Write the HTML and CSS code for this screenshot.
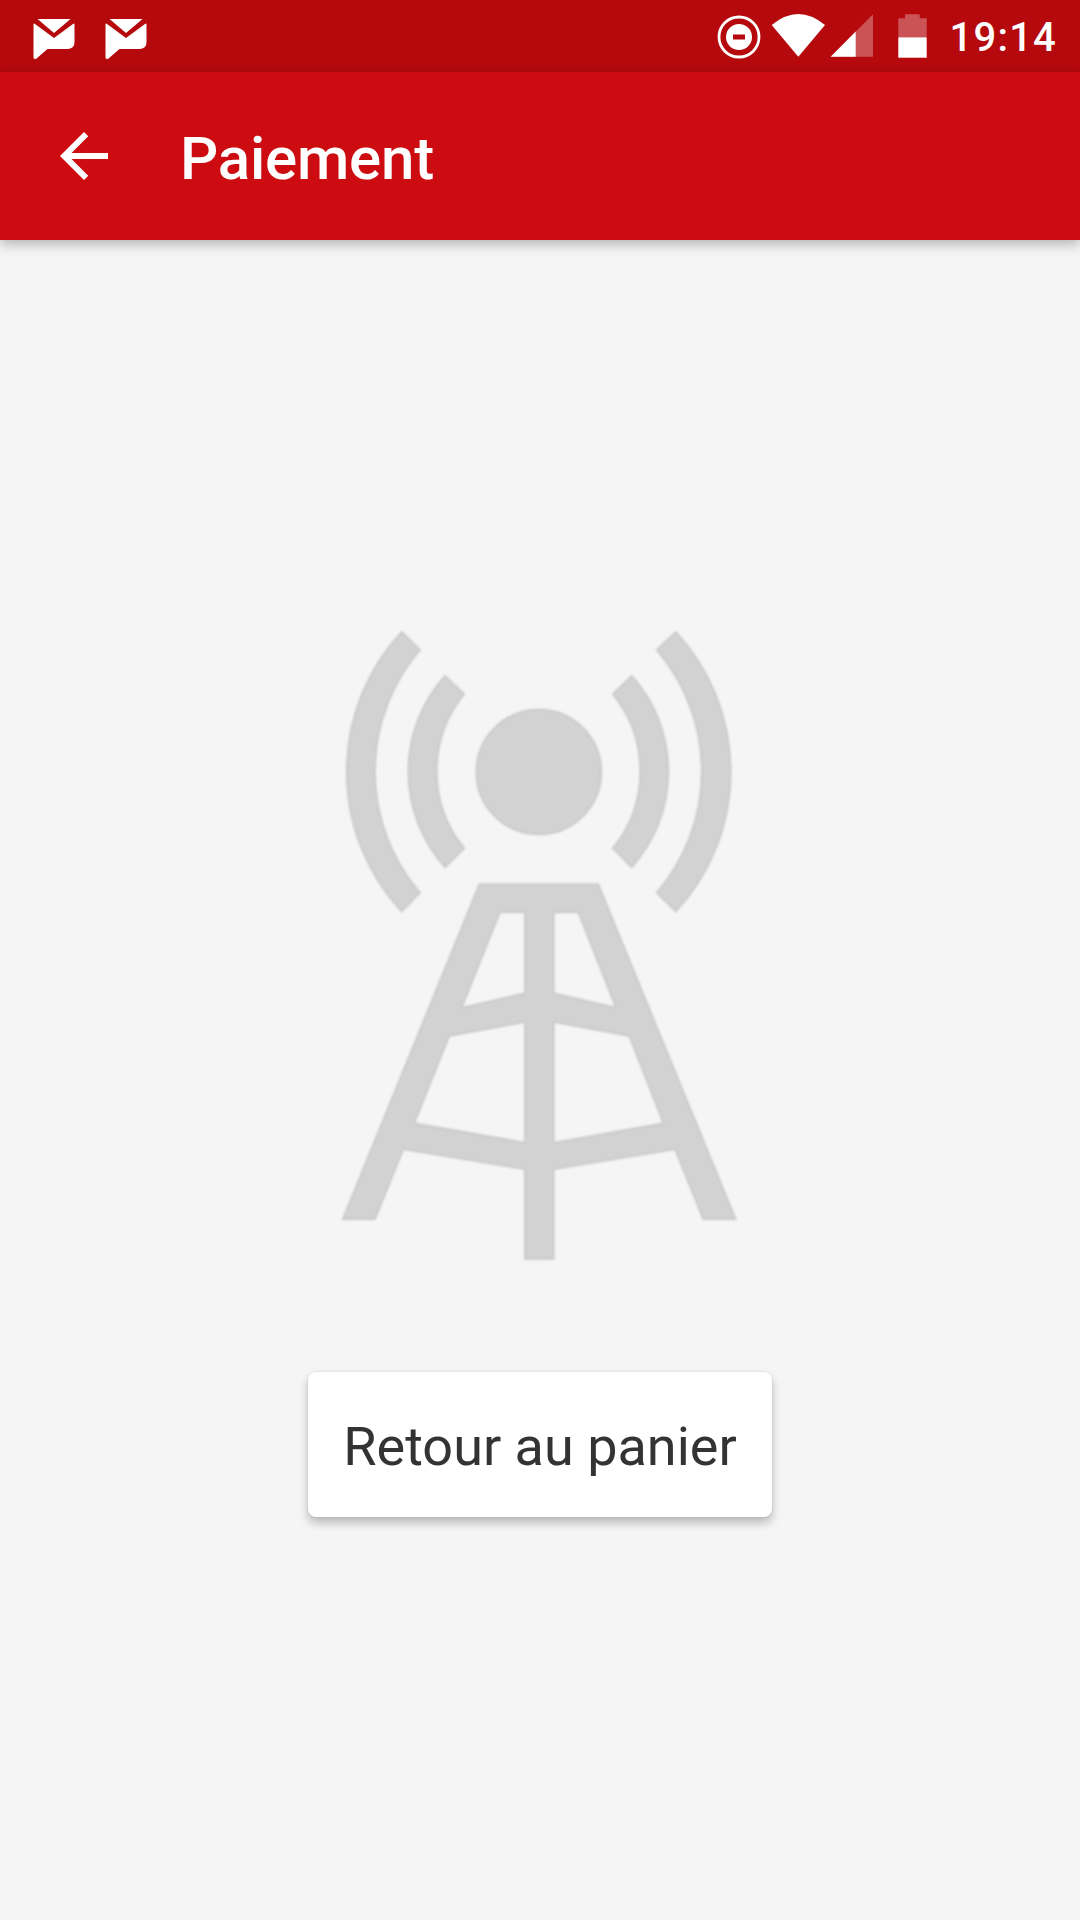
FILE: index.html
```html
<!doctype html>
<html lang="fr">
  <head>
    <title>Paiement</title>
    <meta charset="utf-8"/>
    <link rel="stylesheet" href="styles.css">
  </head>
  <body>
    <div id="wrapper">
      <!-- status bar -->
      <div class="status_bar">
        <div class="status_left">
          <svg class="mail_icon" viewBox="32 19 41 40">
            <path d="M36 19H69L52.5 33Z"/>
            <path d="M32 24.5Q32 23 33.5 24L52.5 38L71.500 24Q73 23 73 24.500V42Q73 49 66 49H46L35 58.500Q32 60 32 57Z"/>
          </svg>
          <svg class="mail_icon" viewBox="32 19 41 40">
            <path d="M36 19H69L52.5 33Z"/>
            <path d="M32 24.5Q32 23 33.5 24L52.5 38L71.500 24Q73 23 73 24.500V42Q73 49 66 49H46L35 58.500Q32 60 32 57Z"/>
          </svg>
        </div>
        <div class="status_right">
          <svg class="dnd_icon" viewBox="718 15 44 44">
            <circle cx="740" cy="37" r="20" fill="none" stroke="#fff" stroke-width="2.800"/>
            <circle cx="740" cy="37" r="13" fill="#fff"/>
            <rect x="734" y="34.500" width="12" height="5" fill="#b5090d"/>
          </svg>
          <svg class="wifi_icon" viewBox="772 13 55 44">
            <path d="M799.300 56.700L772.700 25Q799.300 3 826 25Z" fill="#fff"/>
          </svg>
          <svg class="signal_icon" viewBox="831 14 43 43">
            <path d="M831.700 56.700L874 14.300V56.700Z" fill="#fff" opacity="0.3"/>
            <path d="M831.700 56.700L856.700 31.600V56.700Z" fill="#fff"/>
          </svg>
          <svg class="battery_icon" viewBox="899 14 29 44">
            <path d="M906 14.300H920.700V18.300H927.700V37.300H899.300V18.300H906Z" fill="#fff" opacity="0.3"/>
            <rect x="899.300" y="37.300" width="28.400" height="20.400" fill="#fff"/>
          </svg>
          <span class="clock">19:14</span>
        </div>
      </div>

      <!-- toolbar -->
      <div class="toolbar">
        <svg class="back_icon" viewBox="0 0 24 24">
          <path d="M20 11H7.830l5.590-5.590L12 4l-8 8 8 8 1.410-1.410L7.830 13H20v-2z"/>
        </svg>
        <h1>Paiement</h1>
      </div>

      <!-- no network message -->
      <div class="content">
        <svg class="tower" viewBox="340 630 400 632">
          <path d="M401.700 631.700L420 650A186 186 0 0 0 420 892.700L401.700 911.700A205.700 205.700 0 0 1 401.700 631.700Z"/>
          <path d="M445 675.700L464.300 694A121.800 121.800 0 0 0 464.300 848.300L445 867.300A143.400 143.400 0 0 1 445 675.700Z"/>
          <path d="M675.700 631.700L656.700 650A186 186 0 0 1 656.700 892.700L675.700 911.700A205.700 205.700 0 0 0 675.700 631.700Z"/>
          <path d="M631.700 675.700L612.700 694A121.800 121.800 0 0 1 612.700 848.300L631.700 867.300A143.400 143.400 0 0 0 631.700 675.700Z"/>
          <circle cx="538.800" cy="772" r="62.500"/>
          <path fill-rule="evenodd" d="M479.300 884.300H598.300L735.700 1219.300H703.300L675 1149.300L553.800 1169.300V1259H524.800V1169.300L403.300 1149.300L375 1219.300H342.700Z
            M500 912.300H524.800V993.300L461.700 1007.700Z
            M553.800 912.300H578.300L616 1007.700L553.800 993.300Z
            M449.300 1036L524.800 1022V1142.700L414.300 1123.300Z
            M553.800 1022L629.300 1036L663.300 1123.300L553.800 1142.700Z"/>
        </svg>
        <button class="btn" type="button">Retour au panier</button>
      </div>
    </div>
  </body>
</html>
```

FILE: styles.css
```css
/* page */
html, body{
  margin: 0;
  height: 100%;
}
body{
  font-family: Roboto, "Liberation Sans", sans-serif;
  background-color: #f5f5f5;
}
#wrapper{
  display: flex;
  flex-direction: column;
  height: 1920px;
  overflow: hidden;
}

/* status bar */
.status_bar{
  display: flex;
  justify-content: space-between;
  align-items: flex-start;
  height: 72px;
  padding: 0 23px 0 33px;
  background-color: #b5090d;
}
.status_left{
  display: flex;
  gap: 30px;
  padding-top: 19px;
}
.mail_icon{
  width: 42px;
  height: 40px;
  fill: #fff;
}
.status_right{
  display: flex;
  align-items: flex-start;
}
.dnd_icon{
  width: 44px;
  height: 44px;
  margin-top: 15px;
}
.wifi_icon{
  width: 55px;
  height: 44px;
  margin: 13px 0 0 10px;
}
.signal_icon{
  width: 43px;
  height: 43px;
  margin: 14px 0 0 4px;
}
.battery_icon{
  width: 29px;
  height: 44px;
  margin: 14px 0 0 25px;
}
.clock{
  margin: 14px 0 0 23px;
  color: #fff;
  font-size: 40px;
  font-weight: 500;
  line-height: 48px;
  letter-spacing: 1.200px;
}

/* toolbar */
.toolbar{
  position: relative;
  display: flex;
  align-items: center;
  height: 168px;
  padding-left: 48px;
  background-color: #cc0c10;
  box-shadow: 0 4px 12px rgba(0, 0, 0, 0.28);
}
.back_icon{
  width: 72px;
  height: 72px;
  fill: #fff;
}
.toolbar h1{
  margin: 5px 0 0 60px;
  color: #fff;
  font-size: 60px;
  font-weight: 500;
  line-height: 72px;
  letter-spacing: -0.200px;
}

/* message */
.content{
  display: flex;
  flex-direction: column;
  align-items: center;
  padding-top: 390px;
}
.tower{
  width: 400px;
  height: 632px;
  fill: #d2d2d2;
  stroke: #c6c6c6;
  stroke-width: 1.500;
  filter: blur(0.8px);
}
.btn{
  width: 464px;
  height: 145px;
  margin-top: 110px;
  padding: 4px 0 0 0;
  border: none;
  border-radius: 8px;
  background-color: #fff;
  color: #333;
  font-family: Roboto, "Liberation Sans", sans-serif;
  font-size: 54px;
  box-shadow: 0 6px 10px rgba(0, 0, 0, 0.24), 0 0 3px rgba(0, 0, 0, 0.1);
}
```
